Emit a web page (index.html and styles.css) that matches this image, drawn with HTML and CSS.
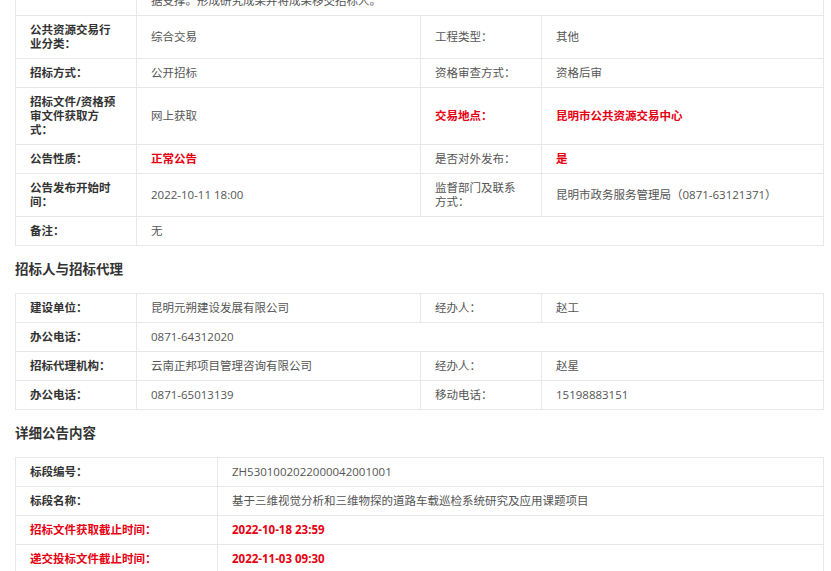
FILE: index.html
```html
<!DOCTYPE html>
<html lang="zh-CN">
<head>
<meta charset="utf-8">
<title>招标公告</title>
<link rel="stylesheet" href="styles.css">
</head>
<body>
<div class="page">
  <table class="info info-first">
    <colgroup><col class="c-lab"><col class="c-val"><col class="c-lab"><col class="c-val2"></colgroup>
    <tr>
      <th></th>
      <td colspan="3">通过三维视觉分析和三维物探技术，开展道路车载巡检系统研究，为道路病害检测提供数<br>据支撑。形成研究成果并将成果移交招标人。</td>
    </tr>
    <tr>
      <th>公共资源交易行业分类：</th>
      <td>综合交易</td>
      <th class="sub">工程类型：</th>
      <td>其他</td>
    </tr>
    <tr>
      <th>招标方式：</th>
      <td>公开招标</td>
      <th class="sub">资格审查方式：</th>
      <td>资格后审</td>
    </tr>
    <tr>
      <th>招标文件/资格预审文件获取方式：</th>
      <td>网上获取</td>
      <th class="red">交易地点：</th>
      <td class="red strong">昆明市公共资源交易中心</td>
    </tr>
    <tr>
      <th>公告性质：</th>
      <td class="red strong">正常公告</td>
      <th class="sub">是否对外发布：</th>
      <td class="red strong">是</td>
    </tr>
    <tr>
      <th>公告发布开始时间：</th>
      <td>2022-10-11 18:00</td>
      <th class="sub">监督部门及联系方式：</th>
      <td>昆明市政务服务管理局（0871-63121371）</td>
    </tr>
    <tr>
      <th>备注：</th>
      <td colspan="3">无</td>
    </tr>
  </table>

  <h2 class="section-title">招标人与招标代理</h2>
  <table class="info">
    <colgroup><col class="c-lab"><col class="c-val"><col class="c-lab"><col class="c-val2"></colgroup>
    <tr>
      <th>建设单位：</th>
      <td>昆明元朔建设发展有限公司</td>
      <th class="sub">经办人：</th>
      <td>赵工</td>
    </tr>
    <tr>
      <th>办公电话：</th>
      <td colspan="3">0871-64312020</td>
    </tr>
    <tr>
      <th>招标代理机构：</th>
      <td>云南正邦项目管理咨询有限公司</td>
      <th class="sub">经办人：</th>
      <td>赵星</td>
    </tr>
    <tr>
      <th>办公电话：</th>
      <td>0871-65013139</td>
      <th class="sub">移动电话：</th>
      <td>15198883151</td>
    </tr>
  </table>

  <h2 class="section-title">详细公告内容</h2>
  <table class="info">
    <colgroup><col class="c-lab-wide"><col class="c-val-wide"></colgroup>
    <tr>
      <th>标段编号：</th>
      <td>ZH5301002022000042001001</td>
    </tr>
    <tr>
      <th>标段名称：</th>
      <td>基于三维视觉分析和三维物探的道路车载巡检系统研究及应用课题项目</td>
    </tr>
    <tr>
      <th class="red">招标文件获取截止时间：</th>
      <td class="red strong">2022-10-18 23:59</td>
    </tr>
    <tr>
      <th class="red">递交投标文件截止时间：</th>
      <td class="red strong">2022-11-03 09:30</td>
    </tr>
  </table>
</div>
</body>
</html>
```
FILE: styles.css
```css
html, body {
  margin: 0;
  padding: 0;
  background: #fff;
}
body {
  font-family: "Open Sans", "Noto Sans CJK SC", sans-serif;
  font-size: 11.5px;
  color: #555;
}
.page {
  padding: 0 8px 0 15px;
}
.info {
  width: 808px;
  table-layout: fixed;
  border-collapse: collapse;
  border: 1px solid #e8e8e8;
}
.info-first {
  margin-top: -28px;
}
.c-lab { width: 121px; }
.c-val { width: 284px; }
.c-val2 { width: 282px; }
.c-lab-wide { width: 202px; }
.c-val-wide { width: 606px; }
.info th,
.info td {
  border: 1px solid #e8e8e8;
  padding: 7px 14px 7px 14px;
  line-height: 14px;
  text-align: left;
  vertical-align: middle;
  word-break: break-all;
}
.info th {
  font-weight: bold;
  color: #333;
  padding-right: 17px;
}
.info th.sub {
  font-weight: normal;
  color: #555;
}
.info td {
  color: #555;
}
.info th.red,
.info td.red {
  color: #e60012;
}
.info .strong {
  font-weight: bold;
}
.section-title {
  margin: 13px 0 14px;
  font-size: 13.5px;
  line-height: 20px;
  font-weight: bold;
  color: #333;
}
```
